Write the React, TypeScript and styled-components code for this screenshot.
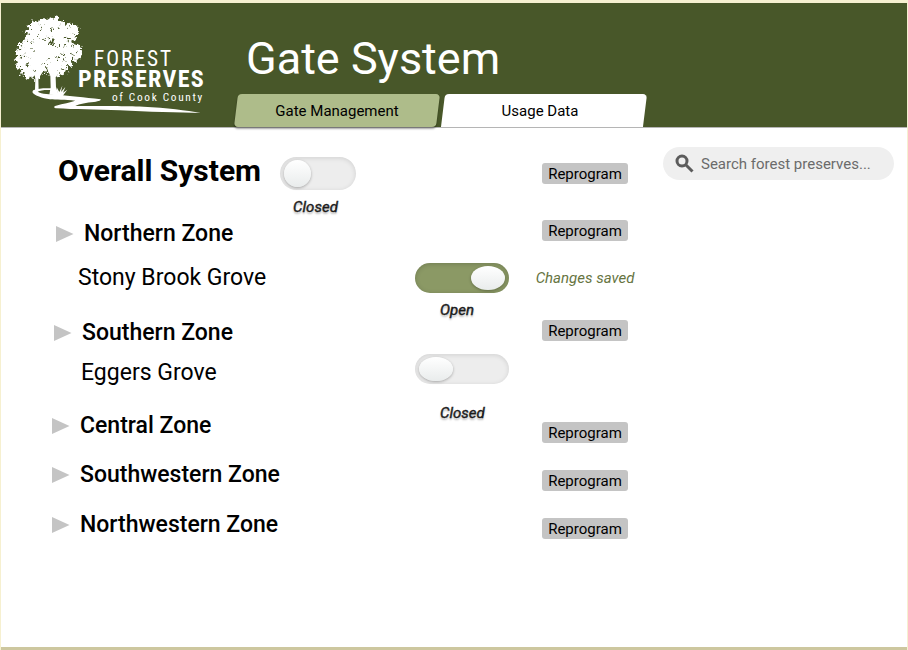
import React, { useState } from "react";
import styled, { createGlobalStyle } from "styled-components";

const GlobalStyle = createGlobalStyle`
  *, *::before, *::after { box-sizing: border-box; }
  body { margin: 0; background: #fff; color: #000; font-family: Roboto, "Liberation Sans", sans-serif; }
  button, input { font: inherit; color: inherit; }
`;

const Page = styled.div`
  min-height: 100vh;
  display: flex;
  flex-direction: column;
  background: #f6f0d0;
  padding: 3px 1px 0;
`;

const Header = styled.header`
  display: flex;
  height: 125px;
  background: #485729;
  border-bottom: 1px solid #b5b5b5;
`;

const Logo = styled.svg`
  width: 220px;
  height: 124px;
  flex: none;
`;

const HeaderBody = styled.div`
  display: flex;
  flex-direction: column;
  justify-content: space-between;
  flex: 1;
  padding-left: 15px;
`;

const Title = styled.h1`
  margin: 0;
  padding: 28px 0 0 10px;
  font-size: 45px;
  line-height: 56px;
  font-weight: 400;
  color: #fff;
`;

const Tabs = styled.nav`
  display: flex;
  gap: 5px;
`;

const Tab = styled.button<{ $active?: boolean }>`
  position: relative;
  z-index: 0;
  width: 202px;
  height: 33px;
  padding: 0 ${(p) => (p.$active ? 0 : 8)}px 0 0;
  border: 0;
  background: none;
  font-size: 15px;
  cursor: pointer;

  &::before {
    content: "";
    position: absolute;
    inset: 0;
    z-index: -1;
    transform: skewX(-7deg);
    border-radius: 4px 4px ${(p) => (p.$active ? "4px 4px" : "0 0")};
    background: ${(p) => (p.$active ? "#aebc8a" : "#fff")};
    box-shadow: ${(p) => (p.$active ? "0 2px 2px rgba(0, 0, 0, 0.35)" : "none")};
  }
`;

const Main = styled.main`
  flex: 1;
  display: grid;
  grid-template-columns: 1fr 231px;
  column-gap: 28px;
  align-items: start;
  padding: 19px 13px 0 51px;
  background: #fff;
  border-bottom: 3px solid #cdc79f;
`;

const List = styled.div`
  display: flex;
  flex-direction: column;
`;

const Row = styled.div<{ $height: number }>`
  display: grid;
  grid-template-columns: 1fr 94px 100px;
  column-gap: 26px;
  align-items: start;
  height: ${(p) => p.$height}px;
`;

const NameCell = styled.div<{ $indent?: number; $top?: number }>`
  display: flex;
  align-items: flex-start;
  padding-left: ${(p) => p.$indent ?? 0}px;
  padding-top: ${(p) => p.$top ?? 0}px;
  margin-right: -26px;
`;

const SystemName = styled.h2`
  margin: 0 19px 0 0;
  font-size: 30px;
  line-height: 28px;
  font-weight: 700;
  white-space: nowrap;
`;

const ZoneName = styled.h3`
  margin: 0;
  font-size: 23px;
  line-height: 28px;
  font-weight: 500;
`;

const Expander = styled.button`
  display: flex;
  align-items: center;
  gap: 10px;
  padding: 0;
  border: 0;
  background: none;
  white-space: nowrap;
  cursor: pointer;
`;

const Arrow = styled.svg`
  width: 18px;
  height: 18px;
  fill: #c4c4c4;
`;

const GateName = styled.span`
  font-size: 23px;
  line-height: 28px;
  white-space: nowrap;
`;

const ActionCell = styled.div<{ $top?: number }>`
  grid-column: 3;
  display: flex;
  justify-content: center;
  padding-top: ${(p) => p.$top ?? 0}px;
`;

const Reprogram = styled.button`
  height: 21px;
  padding: 0 6px;
  border: 0;
  border-radius: 3px;
  background: #c4c4c4;
  font-size: 15px;
  line-height: 20px;
  white-space: nowrap;
  cursor: pointer;
`;

const Saved = styled.output`
  font-size: 15px;
  line-height: 30px;
  font-style: italic;
  color: #66743f;
  white-space: nowrap;
`;

const SwitchBox = styled.div<{ $gap: number; $indent: number }>`
  display: flex;
  flex-direction: column;
  gap: ${(p) => p.$gap}px;

  label {
    padding-left: ${(p) => p.$indent}px;
    font-size: 15px;
    line-height: 18px;
    font-style: italic;
    color: #1c1c1c;
    text-shadow: 0 2px 2px rgba(0, 0, 0, 0.3);
    -webkit-text-stroke: 0.4px #1c1c1c;
  }
`;

const Track = styled.input<{ $compact?: boolean }>`
  appearance: none;
  display: flex;
  align-items: center;
  width: ${(p) => (p.$compact ? 76 : 94)}px;
  height: ${(p) => (p.$compact ? 33 : 30)}px;
  margin: 0;
  padding: 0 4px;
  border-radius: 17px;
  background: #ededed;
  box-shadow: inset 0 1px 5px rgba(0, 0, 0, 0.12);
  cursor: pointer;

  &::before {
    content: "";
    width: ${(p) => (p.$compact ? 27 : 34)}px;
    height: ${(p) => (p.$compact ? 27 : 24)}px;
    border-radius: 50%;
    background: linear-gradient(#fff, #e9ecec);
    box-shadow: 0 1px 3px rgba(0, 0, 0, 0.3);
  }

  &:checked {
    justify-content: flex-end;
    background: #8b9965;
    box-shadow: inset 0 1px 5px rgba(0, 0, 0, 0.18);
  }
`;

const Search = styled.label`
  display: flex;
  align-items: center;
  gap: 7px;
  height: 33px;
  padding: 0 12px;
  border-radius: 17px;
  background: #efefef;
  color: #5c5c5c;

  svg { width: 19px; height: 19px; flex: none; }

  input {
    flex: 1;
    min-width: 0;
    padding: 0;
    border: 0;
    outline: 0;
    background: none;
    font-size: 15px;
    appearance: none;
  }
  input::-webkit-search-cancel-button { display: none; }
  input::placeholder { color: #6b6b6b; opacity: 1; }
`;

const LEAF_GAPS: [number, number, number][] = [
  [98, 92, 2], [112, 108, 3], [128, 88, 2], [158, 90, 3], [176, 82, 2], [206, 84, 2],
  [218, 98, 2], [150, 112, 3], [166, 118, 2], [202, 114, 4], [160, 134, 4], [152, 126, 5], [148, 136, 4],
  [178, 136, 2], [196, 140, 3], [214, 144, 3], [230, 154, 2], [220, 164, 3], [188, 164, 3],
  [174, 172, 3], [192, 182, 4], [160, 168, 2], [144, 176, 2], [134, 192, 3],
  [104, 212, 3], [84, 196, 3], [66, 170, 3], [78, 158, 2], [68, 142, 3],
  [96, 150, 2], [94, 176, 2], [132, 118, 2], [80, 124, 2], [141, 212, 6], [130, 224, 6],
  [174, 214, 4], [122, 72, 2], [100, 122, 2], [186, 204, 3],
];

function PreservesLogo() {
  return (
    <Logo viewBox="3 9 660 372" role="img" aria-label="Forest Preserves of Cook County">
      <defs>
        <filter id="leafy" x="-10%" y="-10%" width="120%" height="120%" colorInterpolationFilters="sRGB">
          <feTurbulence type="fractalNoise" baseFrequency="0.09" numOctaves="3" seed="7" result="noise" />
          <feDisplacementMap in="SourceGraphic" in2="noise" scale="30" xChannelSelector="R" yChannelSelector="G" />
        </filter>
      </defs>
      <g filter="url(#leafy)">
        <path
          fill="#fff"
          d="M100 62L84 78 76 98 90 102 72 112 70 122 52 130 58 145 48 154 52 170 38 183 54 190 48 202 66 206 68 226 82 236 96 228 106 240 120 232 130 222 146 218 154 224 172 220 184 230 200 216 198 202 216 196 218 180 242 178 244 162 250 148 236 134 212 126 226 120 230 106 240 98 234 78 214 68 194 72 180 56 162 50 146 58 130 54 116 60Z"
        />
        {LEAF_GAPS.map(([x, y, r]) => (
          <ellipse key={`${x}-${y}`} cx={x} cy={y} rx={r + 1} ry={r} fill="#485729" />
        ))}
      </g>
      <g fill="#fff">
        <path d="M102 215L106 236 105 272 116 272 115 236 128 216 122 214 112 228 108 214Z" />
        <path d="M138 198L151 228 152 262 148 284 176 286 168 262 167 232 186 206 180 204 165 218 162 196 154 196 155 214Z" />
        <path d="M170 288L162 272 172 280 170 262 178 276 187 257 183 276 196 261 189 278 202 269 188 288Z" />
        <path d="M101 270C116 264 138 264 156 265L154 270C138 269 120 270 113 275 124 283 150 282 176 284 208 289 252 291 302 298 304 301 298 304 282 306 260 308 238 312 226 318 320 318 370 318 430 320 500 323 560 331 602 339 540 338 440 336 360 331 290 329 220 328 170 325 160 323 160 320 168 317 190 311 210 307 226 302 196 299 166 300 150 298 126 294 104 286 98 278 97 274 98 272 101 270Z" />
      </g>
      <g fill="#fff" fontFamily="'Roboto Condensed', 'Liberation Sans Narrow', Roboto, sans-serif">
        <text x="282" y="197" fontSize="64" letterSpacing="6">FOREST</text>
        <text x="234" y="262" fontSize="72" fontWeight="700" letterSpacing="4">PRESERVES</text>
        <text x="336" y="303" fontSize="34" letterSpacing="5">of Cook County</text>
      </g>
    </Logo>
  );
}

function Zone({ name, height, actionTop, indent = 0 }: { name: string; height: number; actionTop: number; indent?: number }) {
  return (
    <Row $height={height}>
      <NameCell $indent={indent}>
        <ZoneName>
          <Expander type="button">
            <Arrow viewBox="0 0 18 18" aria-hidden="true"><path d="M0 1L17.500 9 0 17Z" /></Arrow>
            {name}
          </Expander>
        </ZoneName>
      </NameCell>
      <ActionCell $top={actionTop}>
        <Reprogram type="button" aria-label={`Reprogram ${name}`}>Reprogram</Reprogram>
      </ActionCell>
    </Row>
  );
}

function Switch({ id, name, initial = false, compact, gap }: { id: string; name: string; initial?: boolean; compact?: boolean; gap: number }) {
  const [open, setOpen] = useState(initial);
  return (
    <SwitchBox $gap={gap} $indent={compact ? 13 : 25}>
      <Track
        id={id}
        type="checkbox"
        role="switch"
        title={name}
        $compact={compact}
        checked={open}
        onChange={(e) => setOpen(e.target.checked)}
      />
      <label htmlFor={id}>{open ? "Open" : "Closed"}</label>
    </SwitchBox>
  );
}

export default function App() {
  const [tab, setTab] = useState("Gate Management");
  return (
    <>
      <GlobalStyle />
      <Page>
        <Header>
          <PreservesLogo />
          <HeaderBody>
            <Title>Gate System</Title>
            <Tabs>
              {["Gate Management", "Usage Data"].map((t) => (
                <Tab key={t} type="button" $active={t === tab} onClick={() => setTab(t)}>{t}</Tab>
              ))}
            </Tabs>
          </HeaderBody>
        </Header>
        <Main>
          <List>
            <Row $height={73}>
              <NameCell $indent={6} $top={10}>
                <SystemName>Overall System</SystemName>
                <Switch id="system" name="Overall System" compact gap={8} />
              </NameCell>
              <ActionCell $top={16}>
                <Reprogram type="button" aria-label="Reprogram overall system">Reprogram</Reprogram>
              </ActionCell>
            </Row>
            <Zone name="Northern Zone" height={43} actionTop={0} indent={4} />
            <Row $height={56}>
              <NameCell $indent={26} $top={1}><GateName>Stony Brook Grove</GateName></NameCell>
              <Switch id="stony" name="Stony Brook Grove" initial gap={8} />
              <ActionCell><Saved>Changes saved</Saved></ActionCell>
            </Row>
            <Zone name="Southern Zone" height={35} actionTop={1} indent={2} />
            <Row $height={58}>
              <NameCell $indent={29} $top={5}><GateName>Eggers Grove</GateName></NameCell>
              <Switch id="eggers" name="Eggers Grove" gap={20} />
            </Row>
            <Zone name="Central Zone" height={49} actionTop={10} />
            <Zone name="Southwestern Zone" height={50} actionTop={9} />
            <Zone name="Northwestern Zone" height={50} actionTop={7} />
          </List>
          <Search>
            <svg viewBox="0 0 19 19" fill="none" stroke="currentColor" aria-hidden="true">
              <circle cx="7" cy="7" r="5" strokeWidth="3" />
              <path d="M10.500 10.500L17.500 17.500" strokeWidth="3" />
            </svg>
            <input type="search" aria-label="Search forest preserves" placeholder="Search forest preserves..." />
          </Search>
        </Main>
      </Page>
    </>
  );
}
